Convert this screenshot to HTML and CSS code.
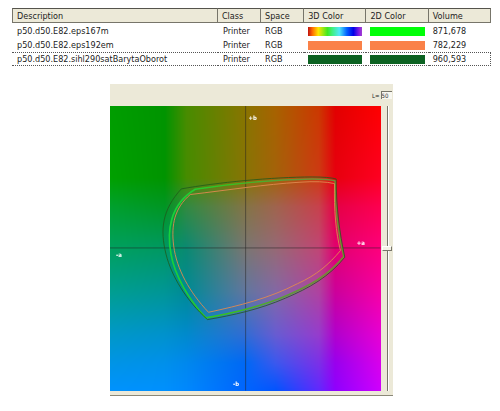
FILE: index.html
```html
<!DOCTYPE html>
<html lang="en">
<head>
<meta charset="utf-8">
<title>Gamut comparison</title>
<link rel="stylesheet" href="styles.css">
</head>
<body>
<table class="profiles">
  <colgroup><col class="c-desc"><col class="c-class"><col class="c-space"><col class="c-color"><col class="c-color"><col class="c-vol"></colgroup>
  <thead>
    <tr><th>Description</th><th>Class</th><th>Space</th><th>3D Color</th><th>2D Color</th><th>Volume</th></tr>
  </thead>
  <tbody>
    <tr><td>p50.d50.E82.eps167m</td><td>Printer</td><td>RGB</td><td><div class="swatch rainbow"></div></td><td><div class="swatch lime"></div></td><td>871,678</td></tr>
    <tr><td>p50.d50.E82.eps192em</td><td>Printer</td><td>RGB</td><td><div class="swatch orange"></div></td><td><div class="swatch orange"></div></td><td>782,229</td></tr>
    <tr class="focused"><td>p50.d50.E82.sihl290satBarytaOborot</td><td>Printer</td><td>RGB</td><td><div class="swatch forest"></div></td><td><div class="swatch forest"></div></td><td>960,593</td></tr>
  </tbody>
</table>

<main class="panel">
  <div class="toolbar">
    <label for="level">L=</label>
    <input id="level" class="level" type="text" value="50">
  </div>
  <div class="body">
    <div class="plot">
      <canvas id="field" class="field" width="272" height="286"></canvas>
      <svg class="curves" viewBox="30 78 816 858" preserveAspectRatio="none" role="img" aria-label="Gamut outlines in the a b plane">
        <defs>
          <linearGradient id="fade" gradientUnits="userSpaceOnUse" x1="200" y1="0" x2="740" y2="0">
            <stop offset="0" stop-color="#14d43c"/>
            <stop offset="0.35" stop-color="#38c020"/>
            <stop offset="0.7" stop-color="#5f9a38"/>
            <stop offset="1" stop-color="#7a8a30"/>
          </linearGradient>
        </defs>
        <path class="axis" d="M439 78V936M30 506H846"/>
        <path class="lime-line" d="M287 329C390 313 530 300 640 298Q690 298 709 304C708 380 718 460 735 532C688 590 630 621 560 651C480 685 400 703 319 717C268 662 225 590 214 525C201 455 210 375 287 329Z"/>
        <path class="dark" d="M245 328C350 309 520 292 640 292Q690 292 712 298C712 380 722 460 738 534C690 594 630 627 560 657C480 692 400 709 324 722C260 665 215 590 199 525C180 450 188 390 245 328Z"/>
        <path class="orange-line" d="M272 345C390 331 500 314 600 308Q670 303 707 312C705 390 711 460 725 514C690 555 655 587 595 614C510 658 420 680 327 700C270 640 231 570 222 500C214 435 225 385 272 345Z"/>
        <text x="448" y="119">+b</text>
        <text x="774" y="497">+a</text>
        <text x="48" y="533">-a</text>
        <text x="401" y="922">-b</text>
      </svg>
    </div>
    <input class="slider" type="range" min="0" max="100" value="50" aria-label="Lightness">
  </div>
</main>
<script src="field.js"></script>
</body>
</html>
```
FILE: styles.css
```css
* { box-sizing: border-box; }

body {
  margin: 0;
  padding: 8px 9px 12px 12px;
  background: #fff;
  color: #222;
  font-family: Tahoma, "DejaVu Sans Condensed", sans-serif;
  font-size: 9px;
}

.profiles {
  width: 100%;
  table-layout: fixed;
  border-collapse: separate;
  border-spacing: 0;
}

.c-desc { width: 43%; }
.c-class { width: 9%; }
.c-space { width: 9%; }
.c-color { width: 13%; }
.c-vol { width: 13%; }

th, td {
  height: 14px;
  padding: 0 4px;
  line-height: 12px;
  text-align: left;
  font-weight: normal;
  white-space: nowrap;
}

th {
  background: #ece9d8;
  border-top: 1px solid #55544c;
  border-bottom: 1px solid #77756a;
  border-right: 1px solid #77756a;
  height: 15px;
}

th:first-child { border-left: 1px solid #77756a; }
th:first-child { padding-left: 4px; }
td:first-child, td:nth-child(2) { padding-left: 5px; }
tbody tr:first-child td { height: 15px; padding-top: 1px; }

.focused td {
  border-top: 1px dotted #555;
  border-bottom: 1px dotted #555;
}
.focused td:last-child { border-right: 1px dotted #555; }

.swatch { height: 9px; }
.rainbow { background: linear-gradient(90deg, #c01010, #ff6a00 8%, #ffe600 19%, #40e820 36%, #40f080 45%, #50e8f8 58%, #0060ff 72%, #0000e8 84%, #8a20e0 95%, #a040d0); }
.lime { background: #00ff08; }
.orange { background: #fa8148; }
.forest { background: #0c6222; }

.panel {
  width: 59%;
  margin: 18px 0 0 98px;
  background: #ece9d8;
  border-bottom: 1px solid #8b8878;
}

.toolbar {
  display: flex;
  justify-content: flex-end;
  align-items: center;
  gap: 1px;
  height: 22px;
  padding-right: 1px;
  font-size: 6px;
}

.level {
  width: 11px;
  height: 8px;
  padding: 0;
  border: 0;
  border-top: 1px solid #77756a;
  border-left: 1px solid #77756a;
  background: #f8f7f0;
  color: #333;
  font: inherit;
}

.body {
  display: flex;
  padding-bottom: 4px;
}

.plot {
  position: relative;
  flex: 1;
  min-width: 0;
}

.field { display: block; width: 100%; height: auto; }

.curves {
  position: absolute;
  inset: 0;
  width: 100%;
  height: 100%;
}

.curves path { fill: none; stroke-width: 3; }
.curves .axis { stroke: #202020; stroke-opacity: 0.5; }
.curves .dark { stroke: #1f5a1c; stroke-opacity: 0.8; }
.curves .lime-line { stroke: url(#fade); stroke-width: 5; }
.curves .orange-line { stroke: #e08a50; stroke-opacity: 0.9; }
.curves text {
  fill: #fff;
  font-family: Tahoma, "DejaVu Sans Condensed", sans-serif;
  font-size: 18px;
  font-weight: bold;
}

.slider {
  appearance: none;
  writing-mode: vertical-lr;
  width: 12px;
  min-height: 0;
  margin: 0;
  background: linear-gradient(90deg, transparent 6px, #77756a 6px, #77756a 7px, #fff 7px, #fff 8px, transparent 8px);
}

.slider::-webkit-slider-thumb {
  appearance: none;
  width: 10px;
  height: 5px;
  background: #f4f2e6;
  border: 1px solid #fff;
  border-right-color: #77756a;
  border-bottom-color: #77756a;
}
```
FILE: field.js
```js
// Paints the a/b plane by interpolating between sampled display colours.
const canvas = document.getElementById("field");
const ctx = canvas.getContext("2d");
const { width, height } = canvas;
const image = ctx.createImageData(width, height);

const columns = [0, 0.2, 0.28, 0.5, 0.61, 0.77, 0.83, 1];
const rows = [0, 0.25, 0.35, 0.5, 0.65, 0.8, 0.9, 1];
const samples = [
  [[0, 157, 0], [0, 148, 0], [72, 140, 0], [138, 116, 0], [168, 98, 0], [204, 56, 0], [226, 0, 0], [255, 0, 0]],
  [[0, 160, 0], [0, 148, 0], [70, 140, 0], [136, 116, 5], [164, 98, 10], [206, 58, 20], [232, 0, 15], [255, 0, 35]],
  [[0, 160, 45], [0, 150, 35], [50, 138, 65], [132, 116, 70], [160, 100, 78], [200, 65, 76], [230, 0, 70], [255, 0, 80]],
  [[0, 160, 95], [0, 152, 98], [10, 138, 115], [122, 118, 115], [150, 105, 118], [192, 70, 118], [226, 0, 112], [255, 0, 125]],
  [[0, 158, 145], [0, 150, 150], [0, 138, 150], [98, 118, 160], [132, 104, 165], [176, 66, 160], [205, 0, 155], [248, 0, 165]],
  [[0, 152, 200], [0, 146, 205], [0, 138, 205], [50, 108, 212], [104, 92, 210], [150, 60, 205], [178, 0, 205], [232, 0, 212]],
  [[0, 148, 230], [0, 144, 235], [0, 136, 238], [0, 104, 245], [60, 88, 238], [124, 48, 232], [154, 0, 238], [218, 0, 236]],
  [[0, 146, 255], [0, 144, 255], [0, 136, 255], [0, 100, 255], [0, 84, 255], [96, 40, 255], [144, 0, 255], [208, 0, 255]]
];

// Index of the interval that holds t, and how far t lies along it.
function locate(stops, t) {
  let i = 0;
  while (i < stops.length - 2 && t > stops[i + 1]) i++;
  return [i, (t - stops[i]) / (stops[i + 1] - stops[i])];
}

const mix = (p, q, t) => p + (q - p) * t;

for (let y = 0; y < height; y++) {
  const [r, v] = locate(rows, y / height);
  for (let x = 0; x < width; x++) {
    const [c, u] = locate(columns, x / width);
    const i = 4 * (y * width + x);
    for (let k = 0; k < 3; k++) {
      const top = mix(samples[r][c][k], samples[r][c + 1][k], u);
      const bottom = mix(samples[r + 1][c][k], samples[r + 1][c + 1][k], u);
      image.data[i + k] = mix(top, bottom, v);
    }
    image.data[i + 3] = 255;
  }
}
ctx.putImageData(image, 0, 0);
```
